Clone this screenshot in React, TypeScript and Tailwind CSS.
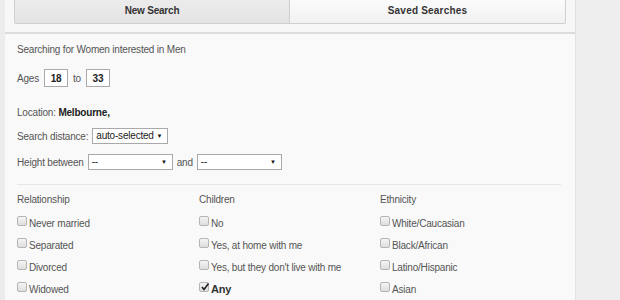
import React from 'react';

const font = { fontFamily: '"Liberation Sans", Arial, sans-serif' };

function Box({ value }: { value: string }) {
  return (
    <div className="w-[24px] h-[18px] border border-[#aaa] bg-white flex items-center justify-center font-bold text-[#222]">
      {value}
    </div>
  );
}

function Select({ label, width }: { label: string; width: string }) {
  return (
    <div className={`${width} h-[16px] border border-[#a9a9a9] bg-white flex items-center justify-between pl-[3px] pr-[5px] text-[#222] whitespace-nowrap`}>
      <span className="leading-none text-[10px]">{label}</span>
      <span className="text-[6px] leading-none text-[#111]">▼</span>
    </div>
  );
}

function Check({ label, checked }: { label: string; checked?: boolean }) {
  return (
    <div className="flex items-center h-[22px]">
      <div className="relative w-[10px] h-[10px] mr-[2px] -mt-[4px] rounded-[2px] border border-[#b5b5b5] bg-gradient-to-b from-[#f4f4f4] to-[#dedede]">
        {checked && (
          <svg viewBox="0 0 10 10" className="absolute -top-[1px] left-0 w-[10px] h-[10px]">
            <path d="M2 5 L4 7.5 L8.5 1.5" stroke="#222" strokeWidth="1.6" fill="none" />
          </svg>
        )}
      </div>
      <span className={checked ? 'font-bold text-[#333] text-[11px]' : ''}>{label}</span>
    </div>
  );
}

export default function App() {
  const columns = [
    { title: 'Relationship', items: ['Never married', 'Separated', 'Divorced', 'Widowed'] },
    { title: 'Children', items: ['No', 'Yes, at home with me', "Yes, but they don't live with me", 'Any'] },
    { title: 'Ethnicity', items: ['White/Caucasian', 'Black/African', 'Latino/Hispanic', 'Asian'] },
  ];

  return (
    <div className="w-[620px] h-[300px] overflow-hidden bg-[#eeeeee] flex text-[10px] tracking-[-0.2px] text-[#555]" style={font}>
      <div className="w-[5px] bg-[#ececec]" />
      <div className="w-[571px] flex flex-col border-r border-[#e2e2e2]">
        <div className="h-[35px] bg-[#f7f7f7] border-b-2 border-[#dcdcdc] px-[9px] flex flex-col">
          <div className="h-[24px] flex border border-t-0 border-[#cfcfcf] rounded-b-[2px]">
            <div className="w-[275px] flex items-center justify-center bg-gradient-to-b from-[#ececec] to-[#e3e3e3] border-r border-[#cfcfcf] font-bold text-[#333] pb-[2px]">
              New Search
            </div>
            <div className="flex-1 flex items-center justify-center bg-gradient-to-b from-[#fbfbfb] to-[#f1f1f1] font-bold text-[#333] tracking-[0.2px] pb-[2px]">
              Saved Searches
            </div>
          </div>
        </div>
        <div className="flex-1 bg-[#f9f9f9] pl-[12px] pr-[14px] pt-[9px]">
          <div className="h-[14px] leading-[14px]">Searching for Women interested in Men</div>
          <div className="flex items-center gap-[4px] mt-[12px] h-[18px]">
            <span className="mr-[1px]">Ages</span>
            <Box value="18" />
            <span className="mx-[1px]">to</span>
            <Box value="33" />
          </div>
          <div className="mt-[19px] h-[14px] leading-[14px]">
            Location: <span className="font-bold text-[#222]">Melbourne,</span>
          </div>
          <div className="flex items-center gap-[4px] mt-[8px] h-[16px]">
            <span>Search distance:</span>
            <Select label="auto-selected" width="w-[76px]" />
          </div>
          <div className="flex items-center gap-[4px] mt-[10px] h-[16px]">
            <span>Height between</span>
            <Select label="--" width="w-[85px]" />
            <span>and</span>
            <Select label="--" width="w-[85px]" />
          </div>
          <div className="mt-[14px] border-t border-[#e6e6e6]" />
          <div className="grid grid-cols-[182px_181px_1fr] pt-[8px]">
            {columns.map((col) => (
              <div key={col.title} className="flex flex-col">
                <div className="h-[14px] leading-[14px] mb-[5px]">{col.title}</div>
                {col.items.map((item) => (
                  <Check key={item} label={item} checked={item === 'Any'} />
                ))}
              </div>
            ))}
          </div>
        </div>
      </div>
    </div>
  );
}
